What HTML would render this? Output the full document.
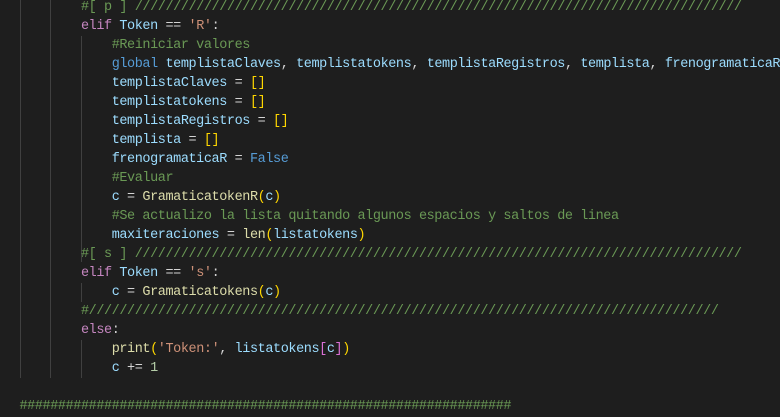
<!DOCTYPE html>
<html><head><meta charset="utf-8"><style>
html,body{margin:0;padding:0;background:#1e1e1e;width:780px;height:417px;overflow:hidden}
.l{position:absolute;left:19.5px;height:19px;line-height:19px;white-space:pre;font-family:"Liberation Mono",monospace;font-size:13.5px;letter-spacing:-0.42px;color:#d4d4d4}
.g{position:absolute;width:1px;background:#404040}
.c{color:#6a9955}.k{color:#c586c0}.v{color:#9cdcfe}.s{color:#ce9178}.f{color:#dcdcaa}.y{color:#ffd700}.p{color:#da70d6}.b{color:#569cd6}.n{color:#b5cea8}
</style></head><body>
<div class="g" style="left:20px;top:0;height:378px"></div>
<div class="g" style="left:50px;top:0;height:378px"></div>
<div class="g" style="left:81px;top:36px;height:226px"></div>
<div class="g" style="left:81px;top:283px;height:19px"></div>
<div class="g" style="left:81px;top:340px;height:38px"></div>
<div class="l" style="top:-2.5px">        <span class="c">#[ p ] ///////////////////////////////////////////////////////////////////////////////</span></div>
<div class="l" style="top:16.5px">        <span class="k">elif</span> <span class="v">Token</span> == <span class="s">'R'</span>:</div>
<div class="l" style="top:35.5px">            <span class="c">#Reiniciar valores</span></div>
<div class="l" style="top:54.5px">            <span class="b">global</span> <span class="v">templistaClaves</span>, <span class="v">templistatokens</span>, <span class="v">templistaRegistros</span>, <span class="v">templista</span>, <span class="v">frenogramaticaR</span></div>
<div class="l" style="top:73.5px">            <span class="v">templistaClaves</span> = <span class="y">[]</span></div>
<div class="l" style="top:92.5px">            <span class="v">templistatokens</span> = <span class="y">[]</span></div>
<div class="l" style="top:111.5px">            <span class="v">templistaRegistros</span> = <span class="y">[]</span></div>
<div class="l" style="top:130.5px">            <span class="v">templista</span> = <span class="y">[]</span></div>
<div class="l" style="top:149.5px">            <span class="v">frenogramaticaR</span> = <span class="b">False</span></div>
<div class="l" style="top:168.5px">            <span class="c">#Evaluar</span></div>
<div class="l" style="top:187.5px">            <span class="v">c</span> = <span class="f">GramaticatokenR</span><span class="y">(</span><span class="v">c</span><span class="y">)</span></div>
<div class="l" style="top:206.5px">            <span class="c">#Se actualizo la lista quitando algunos espacios y saltos de linea</span></div>
<div class="l" style="top:225.5px">            <span class="v">maxiteraciones</span> = <span class="f">len</span><span class="y">(</span><span class="v">listatokens</span><span class="y">)</span></div>
<div class="l" style="top:244.5px">        <span class="c">#[ s ] ///////////////////////////////////////////////////////////////////////////////</span></div>
<div class="l" style="top:263.5px">        <span class="k">elif</span> <span class="v">Token</span> == <span class="s">'s'</span>:</div>
<div class="l" style="top:282.5px">            <span class="v">c</span> = <span class="f">Gramaticatokens</span><span class="y">(</span><span class="v">c</span><span class="y">)</span></div>
<div class="l" style="top:301.5px">        <span class="c">#//////////////////////////////////////////////////////////////////////////////////</span></div>
<div class="l" style="top:320.5px">        <span class="k">else</span>:</div>
<div class="l" style="top:339.5px">            <span class="f">print</span><span class="y">(</span><span class="s">'Token:'</span>, <span class="v">listatokens</span><span class="p">[</span><span class="v">c</span><span class="p">]</span><span class="y">)</span></div>
<div class="l" style="top:358.5px">            <span class="v">c</span> += <span class="n">1</span></div>
<div class="l" style="top:396.5px"><span class="c">################################################################</span></div>
</body></html>
